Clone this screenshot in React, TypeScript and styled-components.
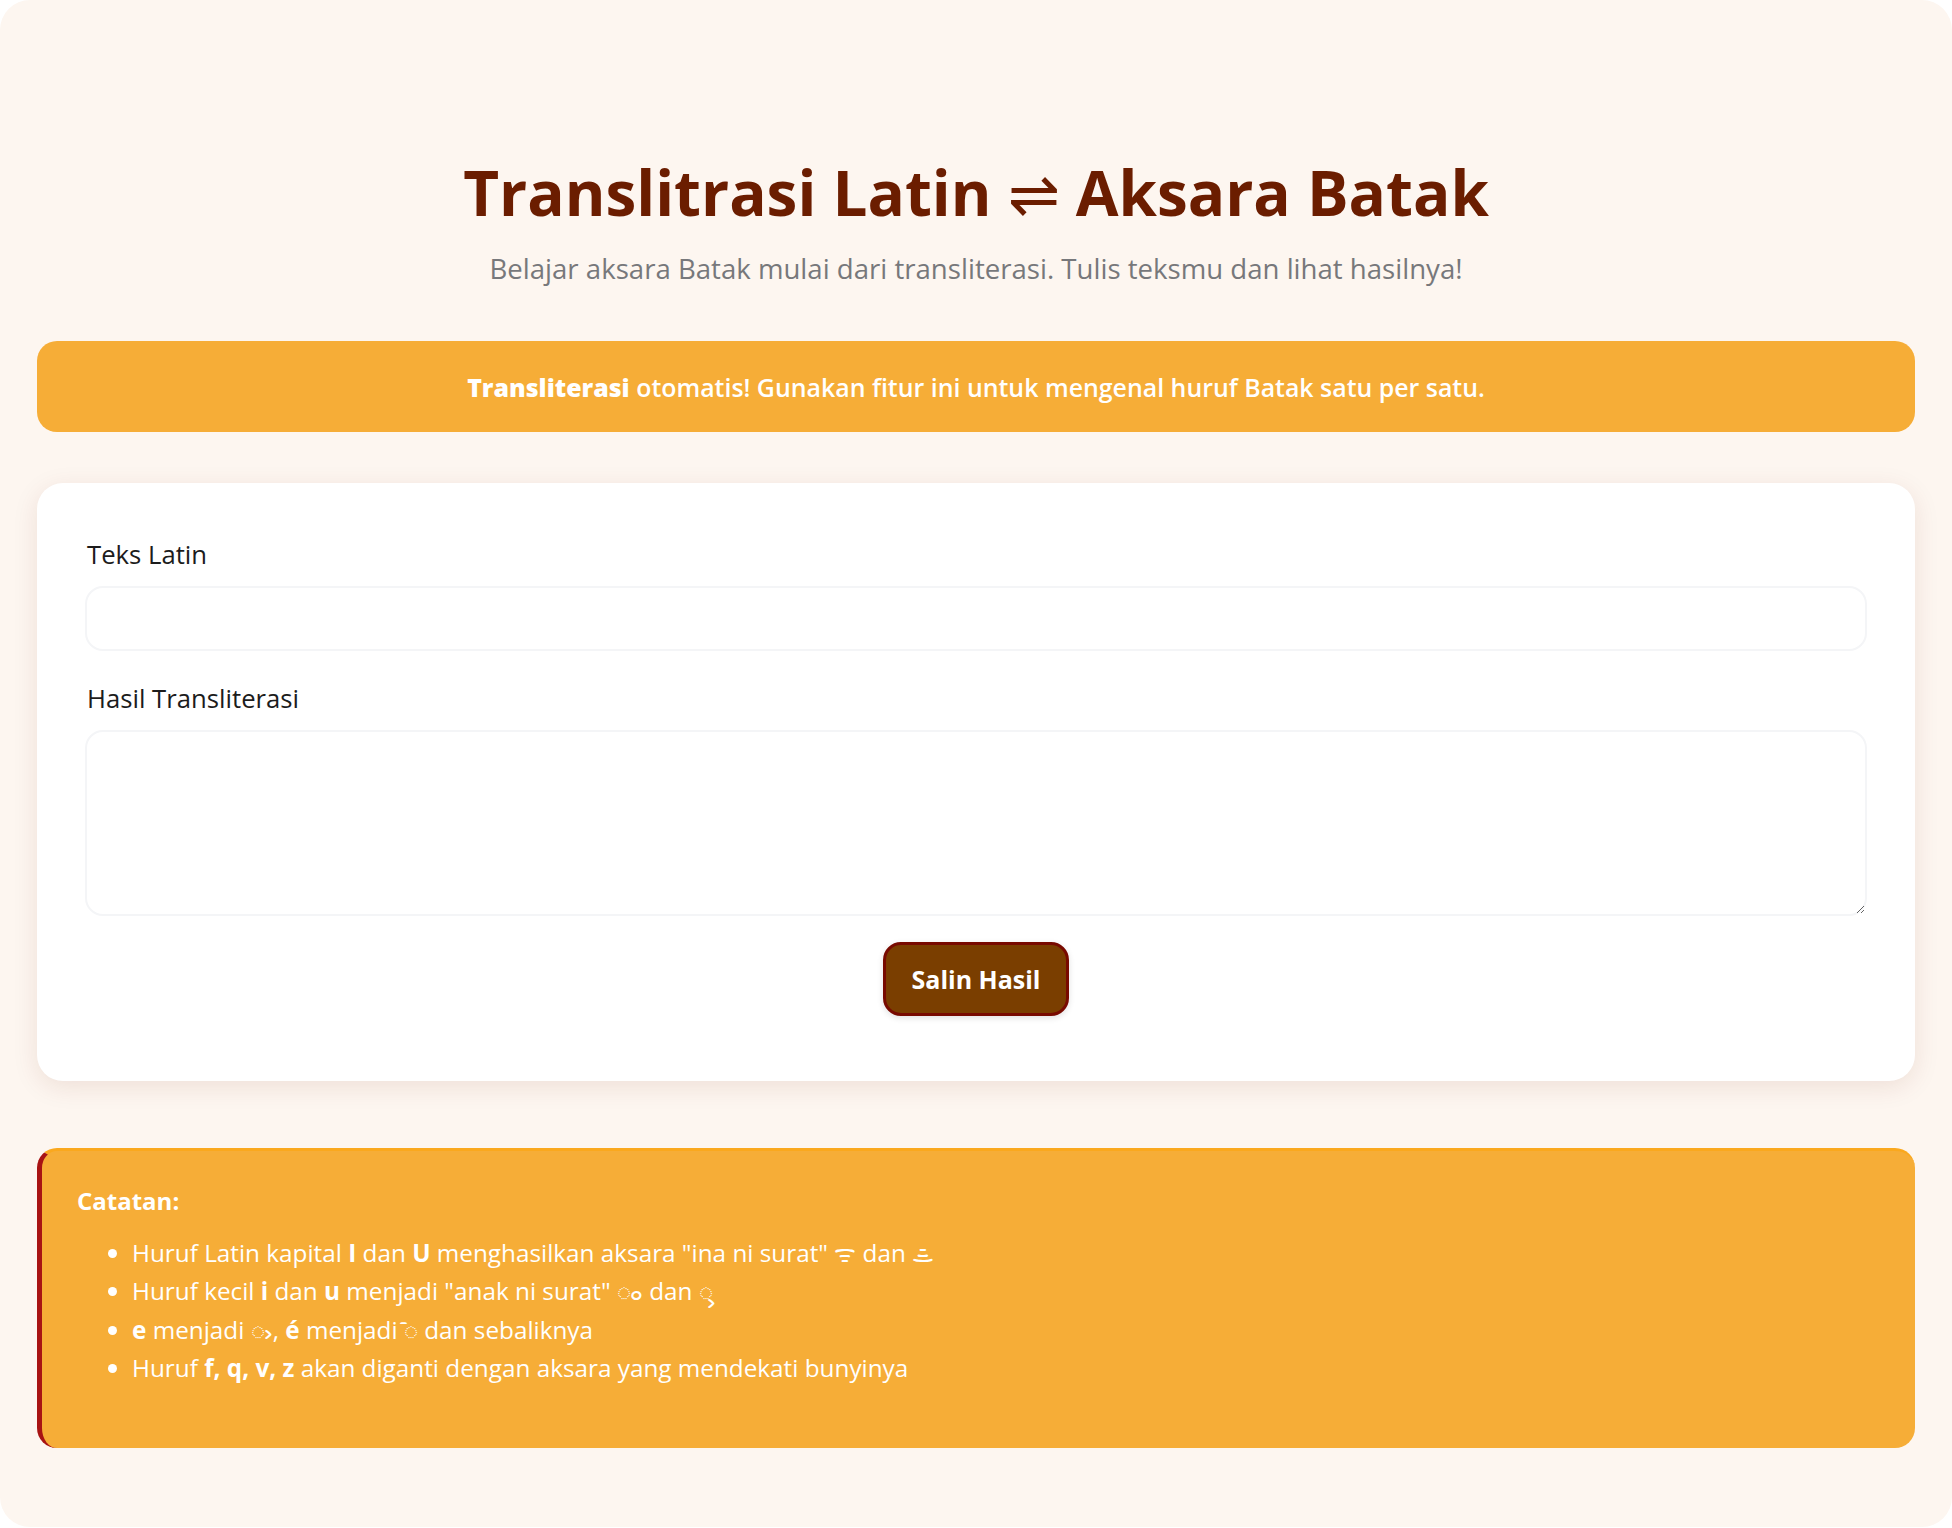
import React from "react";
import styled, { createGlobalStyle } from "styled-components";

const Global = createGlobalStyle`
  html, body { margin: 0; padding: 0; background: #ffffff; }
  body { font-family: "Open Sans", "Noto Sans", "Liberation Sans", sans-serif; }
  * { box-sizing: border-box; }
`;

const Page = styled.div`
  width: 1952px;
  height: 1527px;
  background: #fdf6f0;
  border-radius: 30px;
  padding: 154px 37px 0;
  display: flex;
  flex-direction: column;
`;

const Title = styled.h1`
  margin: 0;
  font-size: 62px;
  line-height: 76px;
  font-weight: 700;
  color: #6b1d00;
  text-align: center;
`;

const TitleArrow = styled.span`
  font-weight: 400;
`;

const Subtitle = styled.p`
  margin: 20px 0 0;
  font-size: 27.6px;
  line-height: 36px;
  font-weight: 400;
  color: #77787b;
  text-align: center;
`;

const Banner = styled.div`
  margin-top: 55px;
  height: 91px;
  background: #f6ad37;
  border-radius: 20px;
  color: #ffffff;
  font-size: 24.9px;
  font-weight: 600;
  display: flex;
  align-items: center;
  justify-content: center;
`;

const Card = styled.section`
  margin-top: 51px;
  height: 598px;
  background: #ffffff;
  border-radius: 26px;
  box-shadow: 0 6px 26px rgba(107, 29, 0, 0.1);
  padding: 54px 48px 0;
  display: flex;
  flex-direction: column;
`;

const Label = styled.label`
  font-size: 25.7px;
  line-height: 36px;
  color: #1c1c1c;
  margin-bottom: 13px;
  padding-left: 2px;
`;

const TextInput = styled.input`
  display: block;
  height: 65px;
  border: 2px solid #f4f5f7;
  border-radius: 18px;
  background: #fff;
  margin-bottom: 30px;
  outline: none;
`;

const TextArea = styled.textarea`
  display: block;
  height: 186px;
  border: 2px solid #f4f5f7;
  border-radius: 18px;
  background: #fff;
  outline: none;
  resize: vertical;
`;

const CopyButton = styled.button`
  align-self: center;
  margin-top: 26px;
  width: 186px;
  height: 74px;
  background: #7a3e00;
  border: 3.5px solid #780a00;
  border-radius: 18px;
  color: #ffffff;
  font-family: inherit;
  font-size: 25px;
  font-weight: 700;
  box-shadow: 0 2px 6px rgba(0, 0, 0, 0.12);
`;

const Note = styled.aside`
  margin-top: 67px;
  height: 300px;
  background: #f6ad37;
  border-top: 3px solid #faa81e;
  border-left: 5px solid #a81313;
  border-radius: 20px;
  padding: 32px 0 0 35px;
  color: #ffffff;
`;

const NoteTitle = styled.div`
  font-size: 24px;
  line-height: 36px;
  font-weight: 700;
`;

const NoteList = styled.ul`
  margin: 15px 0 0;
  padding: 0 0 0 55px;
  font-size: 24.3px;
  font-weight: 500;
  line-height: 38.3px;
`;

export default function App() {
  return (
    <Page>
      <Global />
      <Title>Translitrasi Latin <TitleArrow>⇌</TitleArrow> Aksara Batak</Title>
      <Subtitle>Belajar aksara Batak mulai dari transliterasi. Tulis teksmu dan lihat hasilnya!</Subtitle>
      <Banner><span><b>Transliterasi</b> otomatis! Gunakan fitur ini untuk mengenal huruf Batak satu per satu.</span></Banner>
      <Card>
        <Label>Teks Latin</Label>
        <TextInput />
        <Label>Hasil Transliterasi</Label>
        <TextArea readOnly />
        <CopyButton>Salin Hasil</CopyButton>
      </Card>
      <Note>
        <NoteTitle>Catatan:</NoteTitle>
        <NoteList>
          <li>Huruf Latin kapital <b>I</b> dan <b>U</b> menghasilkan aksara "ina ni surat" ᯤ dan ᯥ</li>
          <li>Huruf kecil <b>i</b> dan <b>u</b> menjadi "anak ni surat" ᯪ dan ᯮ</li>
          <li><b>e</b> menjadi ᯧ, <b>é</b> menjadi ᯩ dan sebaliknya</li>
          <li>Huruf <b>f, q, v, z</b> akan diganti dengan aksara yang mendekati bunyinya</li>
        </NoteList>
      </Note>
    </Page>
  );
}
